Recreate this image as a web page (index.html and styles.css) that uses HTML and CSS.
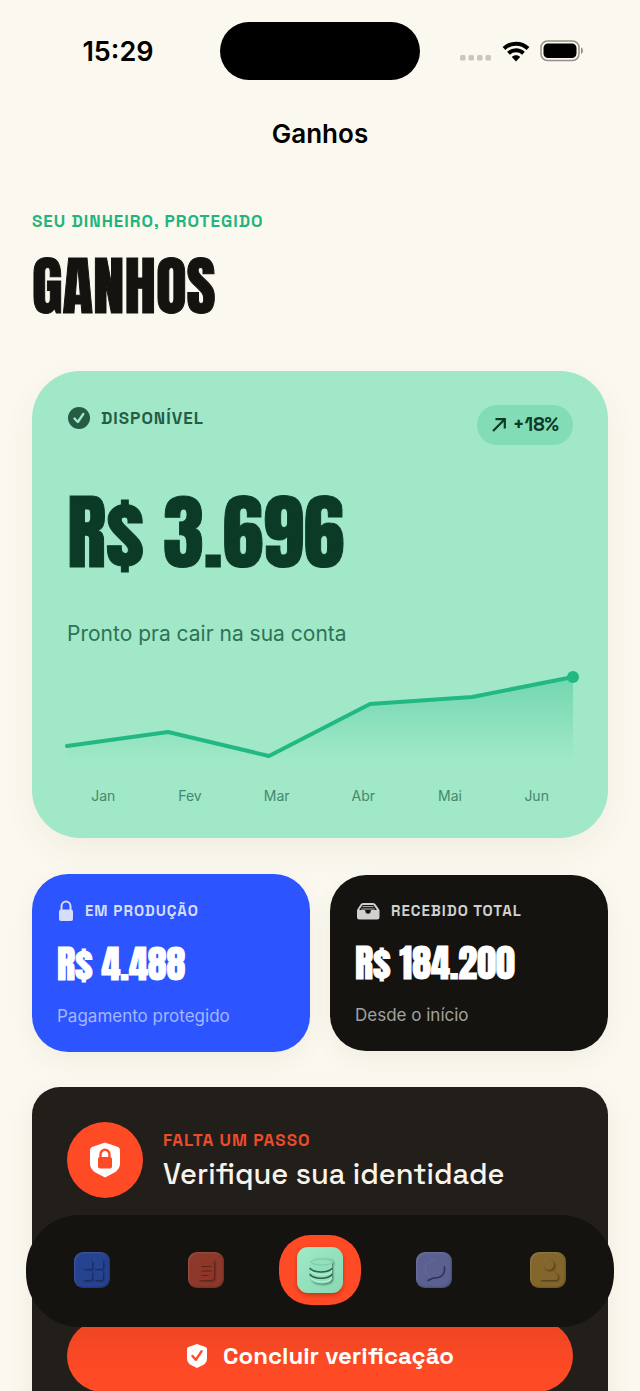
FILE: index.html
```html
<!DOCTYPE html>
<html lang="pt-BR">
<head>
<meta charset="utf-8">
<meta name="viewport" content="width=device-width, initial-scale=1">
<title>Ganhos</title>
<link rel="stylesheet" href="styles.css">
</head>
<body>
<div class="screen">
  <header class="status">
    <time class="status-time">15:29</time>
    <div class="island"></div>
    <div class="status-icons">
      <svg width="32" height="22" viewBox="0 0 32 22" fill="#c9c6bf"><rect x="0" y="15" width="5.500" height="5.500" rx="1.500"/><rect x="8.500" y="15" width="5.500" height="5.500" rx="1.500"/><rect x="17" y="15" width="5.500" height="5.500" rx="1.500"/><rect x="25.500" y="15" width="5.500" height="5.500" rx="1.500"/></svg>
      <svg width="28" height="22" viewBox="0 0 28 22" fill="none" stroke="#000" stroke-width="4"><path d="M2 8.500C8.800 2 19.200 2 26 8.500"/><path d="M6.500 13.200C10.700 9.200 17.300 9.200 21.500 13.200"/><path d="M14 21.500l-4.200-4.500c2.200-2.200 6.200-2.200 8.400 0z" fill="#000" stroke="none"/></svg>
      <svg width="44" height="22" viewBox="0 0 44 22"><rect x="1" y="1" width="38" height="19.500" rx="6.500" fill="none" stroke="#93918b" stroke-width="1.500"/><rect x="3.500" y="3.500" width="33" height="14.500" rx="4.500"/><path d="M41 7.500c2.600 1 2.600 5.500 0 6.500z" fill="#93918b"/></svg>
    </div>
  </header>
  <div class="navbar">Ganhos</div>

  <main class="content">
    <p class="eyebrow">SEU DINHEIRO, PROTEGIDO</p>
    <h1 class="title">GANHOS</h1>

    <section class="balance">
      <div class="balance-top">
        <h2 class="balance-label">
          <svg width="24" height="24" viewBox="0 0 24 24"><circle cx="12" cy="12" r="11" fill="#245c46"/><path d="M7.500 12.500l3.300 3.500 5.500-8" fill="none" stroke="#a0e8c8" stroke-width="2.400" stroke-linecap="round" stroke-linejoin="round"/></svg>
          DISPONÍVEL
        </h2>
        <span class="trend">
          <svg width="16" height="16" viewBox="0 0 16 16" fill="none" stroke="#0b3a27" stroke-width="2.200"><path d="M2 14L13.500 2.500M4.500 2.200h9.300v9.300"/></svg>
          +18%
        </span>
      </div>
      <p class="balance-value">R$ 3.696</p>
      <p class="balance-note">Pronto pra cair na sua conta</p>
      <svg class="chart" viewBox="0 0 506 100" role="img" aria-label="Ganhos de janeiro a junho">
        <defs><linearGradient id="area" x1="0" y1="11" x2="0" y2="94" gradientUnits="userSpaceOnUse"><stop offset="0" stop-color="#22b883" stop-opacity=".36"/><stop offset="1" stop-color="#22b883" stop-opacity="0"/></linearGradient></defs>
        <path d="M0 80L101 66L202 90L303 38L405 31L506 11V98H0z" fill="url(#area)"/>
        <path d="M0 80L101 66L202 90L303 38L405 31L506 11" fill="none" stroke="#22b883" stroke-width="4" stroke-linecap="round" stroke-linejoin="round"/>
        <circle cx="506" cy="11" r="6" fill="#22b883"/>
      </svg>
      <div class="months"><span>Jan</span><span>Fev</span><span>Mar</span><span>Abr</span><span>Mai</span><span>Jun</span></div>
    </section>

    <div class="tiles">
      <section class="tile tile-blue">
        <h2 class="tile-label">
          <svg width="18" height="22" viewBox="0 0 18 22"><path d="M4.500 10V6.500a4.500 5 0 0 1 9 0V10" fill="none" stroke="currentColor" stroke-width="2"/><rect x="2" y="9.500" width="14" height="11.500" rx="2" fill="currentColor"/></svg>
          EM PRODUÇÃO
        </h2>
        <p class="tile-value">R$ 4.488</p>
        <p class="tile-note">Pagamento protegido</p>
      </section>
      <section class="tile tile-black">
        <h2 class="tile-label">
          <svg width="26" height="20" viewBox="0 0 26 20"><path d="M8 2h10q1.800 0 2.700 1.500L24.500 9v7q0 2.500-2.500 2.500H4.500Q2 18.500 2 16V9l3.500-5.500Q6.300 2 8 2z" fill="currentColor"/><path d="M7.500 4h11l3.400 5h-5.200c-.6 0-.8.500-1 1a2.600 2.600 0 0 1-5.300 0c-.2-.500-.5-1-1-1H4.200z" fill="#141310"/><path d="M7.500 5.600h11M6.300 8h13.400" stroke="currentColor" stroke-width=".9"/></svg>
          RECEBIDO TOTAL
        </h2>
        <p class="tile-value">R$ 184.200</p>
        <p class="tile-note">Desde o início</p>
      </section>
    </div>

    <section class="verify">
      <div class="verify-head">
        <span class="verify-badge">
          <svg width="32" height="38" viewBox="0 0 32 38"><path d="M16 1.500l13 4.600q2 .8 2 3v13.500q0 5-4.500 8.300L16 36.500 5.500 30.900Q1 27.600 1 22.600V9.100q0-2.200 2-3z" fill="#fff"/><path d="M11.500 17v-3.500a4.500 4.800 0 0 1 9 0V17" fill="none" stroke="#ff4a26" stroke-width="2.400"/><rect x="9" y="16" width="14" height="11.500" rx="2" fill="#ff4a26"/></svg>
        </span>
        <div>
          <p class="verify-step">FALTA UM PASSO</p>
          <h2 class="verify-title">Verifique sua identidade</h2>
        </div>
      </div>
      <button class="cta" type="button">
        <svg width="22" height="26" viewBox="0 0 22 26"><path d="M11 1l8.500 3Q21 4.600 21 6v9.500q0 4-3.500 6.200L11 25l-6.500-3.300Q1 19.500 1 15.500V6q0-1.400 1.500-2z" fill="#fff"/><path d="M6.500 13l3.300 3.800 5.700-8.500" fill="none" stroke="#ff4a26" stroke-width="2.400" stroke-linecap="round" stroke-linejoin="round"/></svg>
        Concluir verificação
      </button>
    </section>
  </main>

  <nav class="tabbar" aria-label="Principal">
    <button class="tab tab-blue" type="button" aria-label="Painel">
      <svg viewBox="0 0 36 36"><g fill="#264390"><rect x="9" y="8" width="9" height="9" rx="1.500"/><rect x="20" y="8" width="9" height="9" rx="1.500"/><rect x="9" y="19" width="9" height="9" rx="1.500"/><rect x="20" y="19" width="9" height="9" rx="1.500"/></g></svg>
    </button>
    <button class="tab tab-red" type="button" aria-label="Pedidos">
      <svg viewBox="0 0 36 36"><path d="M11 8h15v17q0 3-3 3H11z" fill="#8f3629"/><path d="M14 14.500h9M14 19h9M14 23.500h6" stroke="#5d2019" stroke-width="1.200" stroke-linecap="round"/></svg>
    </button>
    <button class="tab tab-active" type="button" aria-label="Ganhos" aria-current="page">
      <svg viewBox="0 0 46 46"><g fill="#93dfbc"><path d="M14 28v4c2 6 20 6 21 0v-5z"/><path d="M13 21v5c2 6 21 6 22 0v-5z"/><path d="M14 16v5c2 6 20 6 21 0v-5z"/><ellipse cx="25" cy="15.500" rx="11" ry="4.500"/></g><path d="M13 21.500c4 4.500 18 4.500 22 0M13 27.500c4 5 18 5 22 0" fill="none" stroke="#28634c" stroke-width="1.500" stroke-linecap="round"/><path d="M14 15c1-4 20-4 22 0-2 4-20 4-22 0z" fill="none" stroke="#70c6a0" stroke-width=".8"/><path d="M14 24c4 5 18 5 21 0M14 31c4 5 18 5 21 0" fill="none" stroke="#b9f4da" stroke-width="1"/></svg>
    </button>
    <button class="tab tab-lilac" type="button" aria-label="Mensagens">
      <svg viewBox="0 0 36 36"><circle cx="18" cy="17" r="9" fill="#5a608f"/><path d="M28.500 15c1 8-4 11-10 11-3 0-4 2-6.500 2.500" fill="none" stroke="#2d3257" stroke-width="1.600" stroke-linecap="round"/><path d="M13 25c-8-7-2-17 6-17" fill="none" stroke="#666c9e" stroke-width="1"/></svg>
    </button>
    <button class="tab tab-gold" type="button" aria-label="Perfil">
      <svg viewBox="0 0 36 36"><g fill="#83662b"><circle cx="19" cy="13" r="5"/><path d="M10 28v-3q1-5 5-5h8q4 0 5 5v1q0 2-2 2z"/></g></svg>
    </button>
  </nav>
</div>
</body>
</html>
```
FILE: styles.css
```css
* { box-sizing: border-box; }

:root {
  --display: Anton, "Liberation Sans Narrow", sans-serif;
  --label: "Space Grotesk", Inter, sans-serif;
  --cream: #fbf8ef;
  --ink: #141310;
  --orange: #ff4a26;
}

body {
  margin: 0;
  background: var(--cream);
  color: var(--ink);
  font-family: Inter, "Liberation Sans", sans-serif;
}

p, h1, h2 { margin: 0; }
svg { display: block; flex: none; }
button { border: 0; font: inherit; cursor: pointer; }

.screen {
  position: relative;
  height: 100vh;
  overflow: hidden;
}

.status {
  display: grid;
  grid-template-columns: 1fr 200px 1fr;
  align-items: center;
  height: 102px;
}
.status-time {
  padding-left: 16px;
  text-align: center;
  font-size: 27px;
  font-weight: 600;
  color: #000;
}
.island {
  height: 58px;
  border-radius: 29px;
  background: #000;
}
.status-icons {
  display: flex;
  justify-content: center;
  gap: 10px;
  padding-right: 16px;
}

.navbar {
  height: 64px;
  line-height: 64px;
  text-align: center;
  font-size: 26px;
  font-weight: 600;
  color: #000;
}

.content { padding: 43px 32px 0; }

.title, .balance-value, .tile-value {
  font-family: var(--display);
  font-weight: 400;
  -webkit-text-stroke: 1px currentColor;
}

.eyebrow {
  font: 600 17px/24px var(--label);
  letter-spacing: 1px;
  color: #22b47d;
}
.title {
  margin: 18px 0 48px;
  font-size: 63px;
  line-height: 72px;
}

.balance {
  padding: 34px 35px 32px;
  border-radius: 48px;
  background: #a0e8c8;
  color: #0b3a27;
  box-shadow: 0 12px 32px rgba(90, 60, 30, .06);
}
.balance-top {
  display: flex;
  justify-content: space-between;
  align-items: flex-start;
}
.balance-label {
  display: flex;
  align-items: center;
  gap: 10px;
  font: 600 17px/26px var(--label);
  letter-spacing: 1px;
  color: #245c46;
}
.trend {
  display: flex;
  align-items: center;
  gap: 6px;
  height: 40px;
  padding: 0 14px;
  border-radius: 20px;
  background: #82dcb6;
  font: 600 19px/24px var(--label);
}
.balance-value {
  margin-top: 40px;
  font-size: 82px;
  line-height: 96px;
}
.balance-note {
  margin: 39px 0 18px;
  font-size: 21px;
  line-height: 28px;
  color: #2f7257;
}
.chart {
  width: 100%;
  overflow: visible;
}
.months {
  display: grid;
  grid-template-columns: repeat(6, 1fr);
  margin: 20px -7px 0;
  text-align: center;
  font-size: 14px;
  line-height: 20px;
  color: #46876d;
}

.tiles {
  display: grid;
  grid-template-columns: 1fr 1fr;
  align-items: center;
  gap: 20px;
  margin: 36px 0 35px;
}
.tile {
  padding: 26px 25px 24px;
  border-radius: 36px;
  color: #fff;
  box-shadow: 0 8px 24px rgba(90, 70, 30, .06);
}
.tile-blue { background: #2c55ff; }
.tile-black { background: var(--ink); }
.tile-label {
  display: flex;
  align-items: center;
  gap: 10px;
  font: 600 15px/20px var(--label);
  letter-spacing: 1px;
}
.tile-blue .tile-label { color: #d5ddfb; }
.tile-black .tile-label { color: #d0d0cf; }
.tile-value {
  margin: 18px 0 16px;
  font-size: 38px;
  line-height: 48px;
}
.tile-note {
  font-size: 17px;
  line-height: 24px;
}
.tile-blue .tile-note { color: #a4b6ff; }
.tile-black .tile-note { color: #a3a2a1; }

.verify {
  padding: 35px;
  border-radius: 28px;
  background: #221e1a;
  box-shadow: 0 8px 24px rgba(90, 70, 30, .08);
}
.verify-head {
  display: flex;
  align-items: center;
  gap: 20px;
}
.verify-badge {
  display: grid;
  place-items: center;
  flex: none;
  width: 76px;
  height: 76px;
  border-radius: 50%;
  background: var(--orange);
}
.verify-step {
  margin-bottom: 5px;
  font: 600 17px/22px var(--label);
  letter-spacing: 1px;
  color: #ef4b2b;
}
.verify-title {
  font: 500 29px/36px var(--label);
  color: #f8f3eb;
}
.cta {
  display: flex;
  align-items: center;
  justify-content: center;
  gap: 15px;
  width: 100%;
  height: 72px;
  margin-top: 122px;
  border-radius: 36px;
  background: linear-gradient(#ec4523, var(--orange) 70%);
  color: #fff;
  font: 600 24px/32px var(--label);
}

.tabbar {
  position: absolute;
  right: 26px;
  bottom: 64px;
  left: 26px;
  display: grid;
  grid-template-columns: repeat(5, 1fr);
  place-items: center;
  height: 112px;
  padding: 0 9px 2px;
  border-radius: 54px;
  background: var(--ink);
}
.tab {
  width: 36px;
  height: 36px;
  padding: 0;
  border-radius: 9px;
  box-shadow: inset 1px 1px 2px rgba(255, 255, 255, .12), inset -1px -1px 2px rgba(0, 0, 0, .2);
}
.tab svg { width: 100%; }
.tab svg > g, .tab svg > path:first-child {
  filter: drop-shadow(1px 1px 1px rgba(0, 0, 0, .5)) drop-shadow(-1px -1px 0 rgba(255, 255, 255, .04));
}
.tab-blue { background: #264290; }
.tab-red { background: #8d382b; }
.tab-lilac { background: #5a608f; }
.tab-gold { background: #83662b; }
.tab-active {
  display: grid;
  place-items: center;
  width: 82px;
  height: 70px;
  border-radius: 32px;
  background: var(--orange);
  box-shadow: none;
}
.tab-active svg {
  width: 46px;
  border-radius: 11px;
  background: linear-gradient(135deg, #a0e9c8, #88d8b3);
  box-shadow: 0 2px 4px rgba(60, 20, 0, .35);
}
```
